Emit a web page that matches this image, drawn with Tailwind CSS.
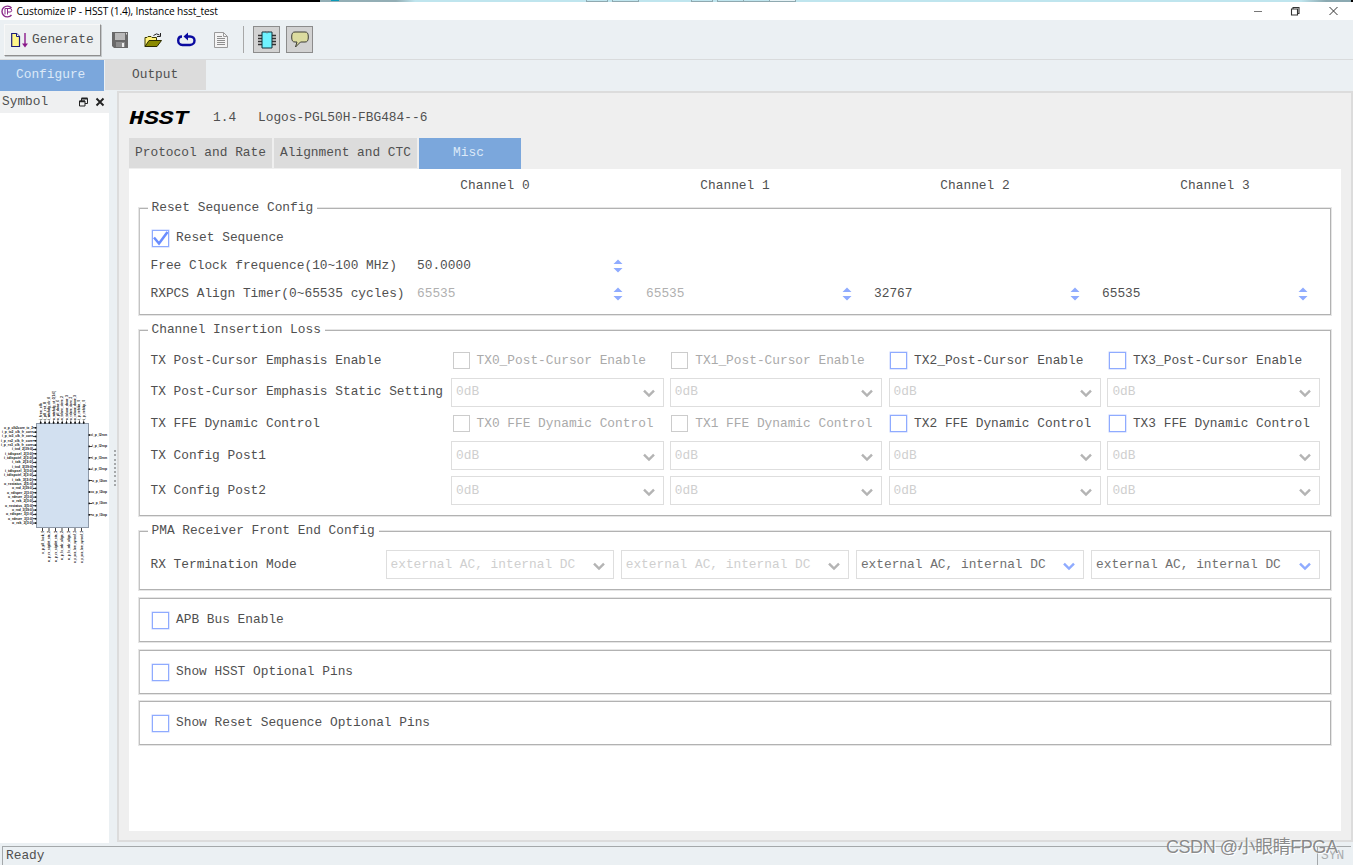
<!DOCTYPE html>
<html lang="en">

<head>
    <meta charset="UTF-8">
    <meta name="viewport" content="width=device-width, initial-scale=1.0">
    <title>Customize IP - HSST</title>
    <script src="https://cdn.jsdelivr.net/npm/@tailwindcss/browser@4"></script>
</head>

<body class="w-[1353px] h-[865px] overflow-hidden relative flex flex-col bg-[#ebf0f3] text-[#505050] text-[12.84px] leading-4 whitespace-nowrap font-['Liberation_Mono',monospace]">
    <!-- Shared shapes -->
    <svg class="hidden">
        <symbol id="chevron" viewBox="0 0 12 9"><path d="M1 1.6L6 6.6L11 1.6" fill="none" stroke="currentColor" stroke-width="2.4" /></symbol>
        <symbol id="spin" viewBox="0 0 10 14"><path d="M5 0.5L9.5 5H0.5ZM5 13.5L9.5 9H0.5Z" fill="#8fabff" /></symbol>
    </svg>

    <!-- Strip of the window behind -->
    <div class="h-[2px] shrink-0 flex">
        <div class="w-[320px] bg-black"></div>
        <div class="w-[95px] bg-linear-to-r from-[#93aeb5] from-80% to-[#bfe5ee] pl-[11px]"><div class="w-2 h-px bg-[#0a9ab8]"></div></div>
        <div class="flex-1 bg-[#bfe5ee] flex pl-[171px]">
            <div class="w-[22px] border-x border-b border-[#8fa9b0]"></div>
            <div class="w-[27px] ml-1 border-x border-b border-[#8fa9b0]"></div>
            <div class="w-[22px] ml-[52px] border-x border-b border-[#8fa9b0]"></div>
            <div class="w-[27px] ml-1 border-x border-b border-[#8fa9b0]"></div>
            <div class="w-[26px] border-r border-b border-[#8fa9b0]"></div>
            <div class="w-[26px] border-r border-b border-[#8fa9b0] bg-[#e6f2f5]"></div>
        </div>
        <div class="w-[50px] bg-linear-to-r from-[#bfe5ee] to-[#8ba9b1] to-50%"></div>
        <div class="w-[2px] bg-black"></div>
    </div>

    <!-- Title bar -->
    <div class="h-[18px] shrink-0 bg-white flex items-center">
        <svg class="w-[13px] h-[13px]" viewBox="0 0 13 13" fill="none" stroke="#8a2a8a">
            <path d="M11.5 3A5.4 5.4 0 1 0 11.5 10" stroke-width="1.4" />
            <path d="M5 3.5V9.5M7.5 9.5V3.5H10A1.6 1.6 0 0 1 10 7H7.5M5 3.5H8" stroke-width="1" />
        </svg>
        <span class="ml-[3.5px] text-[10.2px] tracking-[-0.13px] text-black font-['Open_Sans',sans-serif]">Customize IP - HSST (1.4), Instance hsst_test</span>
        <svg class="ml-auto mr-[15px] w-[84px] h-[10px]" viewBox="0 0 84 10" fill="none" stroke="#333">
            <path d="M0 5.5H8" stroke="#777" />
            <path d="M37.5 3H43.5V9H37.5ZM39 3V1.5H45V7.5H43.5" stroke-width="1.1" />
            <path d="M75.500 1L83.500 9M83.500 1L75.500 9" />
        </svg>
    </div>

    <!-- Toolbar -->
    <div class="h-10 shrink-0 border-b border-[#d9dbdc] flex items-center pl-1">
        <div class="w-[97px] h-8 mt-px border-r border-b border-[#8f8f8f] border-t border-l border-t-[#f8f8f8] border-l-[#f8f8f8] shadow-[1px_1px_0_#c4c8ca] flex items-center pl-[6px] bg-[#edf0f1]">
            <svg class="w-[17px] h-4" viewBox="0 0 17 16">
                <path d="M0.700 1.500H5.500L8.500 4.500V14.500H0.700Z" fill="#fff68a" stroke="#1c1c78" stroke-width="1.2" />
                <path d="M5.500 1.500V4.500H8.500" fill="#fff" stroke="#1c1c78" />
                <path d="M14 1V13.500" stroke="#8a1a8a" stroke-width="1.4" />
                <path d="M11 11.500H17L14 15.500Z" fill="#8a1a8a" />
            </svg>
            <span class="ml-[4px]">Generate</span>
        </div>
        <svg class="ml-[11px] w-4 h-4" viewBox="0 0 16 16">
            <path d="M0 0H16V16H2L0 14Z" fill="#696969" />
            <path d="M3 1H13V8H3Z" fill="#b9b9b9" />
            <path d="M4 10H13V15H4Z" fill="#8d8d8d" />
            <path d="M10 11H12V15H10Z" fill="#eee" />
            <path d="M14 1H15V2.500H14Z" fill="#ddd" />
        </svg>
        <svg class="ml-[16px] w-[19px] h-4" viewBox="0 0 19 16">
            <path d="M1 14.500V5.500H3L4 4.500H7L8 5.500H12.500V8.500" fill="#fff27a" stroke="#3b3b00" />
            <path d="M1 14.500L5 8.500H17.500L13 14.500Z" fill="#8a8a00" stroke="#2c2c00" />
            <path d="M9.500 3.500Q12.500 0.500 15.500 3M16.500 1V4.500H13" fill="none" stroke="#222" />
        </svg>
        <svg class="ml-[14px] w-[19px] h-4" viewBox="0 0 19 16">
            <path d="M5 4.500C2.500 4.500 1.200 6.300 1.200 8.500S2.500 13 5.500 13H13C16 13 17.500 10.700 17.500 8.500S16 4.500 13 4.500H10" fill="none" stroke="#0a0aa0" stroke-width="2.4" />
            <path d="M11 0.500V8.500L6.500 4.500Z" fill="#0a0aa0" />
        </svg>
        <svg class="ml-[18px] w-[14px] h-4" viewBox="0 0 14 16">
            <path d="M0.500 0.500H9.500L13.500 4.500V15.500H0.500Z" fill="#f4f4f4" stroke="#9a9a9a" />
            <path d="M9.500 0.500V4.500H13.500" fill="none" stroke="#9a9a9a" />
            <path d="M3 4.500H8M3 6.500H11M3 8.500H11M3 10.500H11M3 12.500H11" stroke="#8e8e8e" />
        </svg>
        <div class="ml-[15px] w-px h-[27px] bg-[#a8a8a8]"></div>
        <div class="ml-[9px] w-[27px] h-[27px] bg-[#d2d2d2] border border-[#8c8c8c] flex items-center justify-center">
            <svg class="w-[18px] h-[18px]" viewBox="0 0 18 18">
                <path d="M0 4.500H18M0 7.500H18M0 10.500H18M0 13.500H18" stroke="#333" stroke-width="1.300" />
                <path d="M4 1H14V17H4Z" fill="#6ff3ff" stroke="#14303a" />
                <path d="M7.500 1Q9 3 10.500 1" fill="#fff" stroke="#14303a" stroke-width="0.700" />
            </svg>
        </div>
        <div class="ml-[6px] w-[27px] h-[27px] bg-[#d2d2d2] border border-[#8c8c8c] flex items-center justify-center">
            <svg class="w-[18px] h-[17px]" viewBox="0 0 18 17">
                <path d="M4 1H14C16.500 1 17.300 2.500 17.300 6S16.500 11 14 11H9.500L4.500 16L6 11H4C1.500 11 0.700 9.500 0.700 6S1.500 1 4 1Z" fill="#dcdca0" stroke="#3c3c34" />
            </svg>
        </div>
    </div>

    <!-- Main tabs -->
    <div class="h-[31px] shrink-0 flex">
        <div class="w-[104px] h-[31px] bg-[#7ba7dc] text-[#dce9f8] pl-4 pt-[7px]">Configure</div>
        <div class="ml-px w-[101px] h-[30px] bg-[#dcdcdc] pl-[27px] pt-[7px]">Output</div>
    </div>

    <div class="h-[752px] shrink-0 flex">
        <!-- Symbol dock -->
        <div class="w-[109px] shrink-0 flex flex-col">
            <div class="h-[22px] shrink-0 bg-[#eff0f1] flex items-center pl-[2px] pr-[4px]">
                <span>Symbol</span>
                <svg class="ml-auto w-[27px] h-[10px]" viewBox="0 0 27 10" fill="none" stroke="#222">
                    <path d="M1.500 4H7V9H1.500ZM3.500 4V1.500H9.500V6.500H7" />
                    <path d="M1.500 4.300H7M3.500 1.500H9.500" stroke-width="1.800" />
                    <path d="M18.500 1.500L25.500 8.500M25.500 1.500L18.500 8.500" stroke-width="1.900" />
                </svg>
            </div>
            <div class="flex-1 bg-white">
                <svg id="symbol" class="w-[109px] h-[730px] font-['Liberation_Sans',sans-serif] font-bold" viewBox="0 113 109 730" font-size="3.2" fill="#111">
                    <rect x="36.500" y="423.500" width="52" height="104" fill="#d2e0f0" stroke="#8e99a8" />
                </svg>
            </div>
        </div>
        <div class="w-2 shrink-0 flex flex-col items-end justify-center pr-px pt-[2px] gap-[2.2px]" id="grip"></div>

        <!-- Configuration page -->
        <div class="w-[1236px] shrink-0 h-[751px] border-2 border-[#dcdcdc] bg-[#efefef] px-[10px] pr-[10px]">
            <div class="h-[45px] flex items-center pt-[4px]">
                <div class="w-[84px]"><span class="inline-block origin-left scale-x-[1.24] translate-y-px text-[20px] leading-6 font-bold italic text-black">HSST</span></div>
                <span class="w-[45px]">1.4</span>
                <span>Logos-PGL50H-FBG484--6</span>
            </div>
            <div class="h-[31px] flex gap-[2px]">
                <div class="w-[143px] h-[30px] bg-[#dcdcdc] pt-[7px] text-center">Protocol and Rate</div>
                <div class="w-[143px] h-[30px] bg-[#dcdcdc] pt-[7px] text-center">Alignment and CTC</div>
                <div class="w-[102px] bg-[#7ba7dc] text-[#dce9f8] pt-[7px] pr-[3px] text-center">Misc</div>
            </div>
            <div class="h-[662px] bg-white px-[10px] pt-[9px] flex flex-col">
                <div class="h-[30px] shrink-0 grid grid-cols-[repeat(4,240px)] pl-[236px] text-center">
                    <span>Channel 0</span><span>Channel 1</span><span>Channel 2</span><span>Channel 3</span>
                </div>

                <!-- Reset Sequence Config -->
                <div class="relative h-[107px] border border-[#b2b2b2] border-l-[#c4c4c4] shadow-[0_0_0_1px_#e6e6e6] pl-[10.5px] pt-[19px]">
                    <span class="absolute -top-[9px] left-[7.5px] bg-white px-1">Reset Sequence Config</span>
                    <div class="h-[20px] flex items-center gap-[7px] pl-[1.5px]">
                        <div class="w-[17px] h-[17px] border border-[#8fabff] shadow-[0_0_0_0.5px_#c3d1ff]">
                            <svg class="w-[15px] h-[15px]" viewBox="0 0 15 15"><path d="M1 6.500L6 12.500L14.500 1" fill="none" stroke="#6a8dff" stroke-width="2.500" /></svg>
                        </div>
                        <span>Reset Sequence</span>
                    </div>
                    <div class="h-[28px] mt-[4px] flex items-center">
                        <span class="w-[266.500px]">Free Clock frequence(10~100 MHz)</span>
                        <span class="w-[196px]">50.0000</span>
                        <svg class="w-[10px] h-[14px]"><use href="#spin" /></svg>
                    </div>
                    <div class="h-[28px] flex items-center">
                        <span class="w-[266.500px]">RXPCS Align Timer(0~65535 cycles)</span>
                        <div class="w-[229px] flex items-center text-[#b0b0b0]"><span class="w-[196px]">65535</span><svg class="w-[10px] h-[14px]"><use href="#spin" /></svg></div>
                        <div class="w-[228px] flex items-center text-[#b0b0b0]"><span class="w-[196px]">65535</span><svg class="w-[10px] h-[14px]"><use href="#spin" /></svg></div>
                        <div class="w-[228px] flex items-center"><span class="w-[196px]">32767</span><svg class="w-[10px] h-[14px]"><use href="#spin" /></svg></div>
                        <div class="flex items-center"><span class="w-[196px]">65535</span><svg class="w-[10px] h-[14px]"><use href="#spin" /></svg></div>
                    </div>
                </div>

                <!-- Channel Insertion Loss -->
                <div class="relative mt-[15px] h-[186px] border border-[#b2b2b2] border-l-[#c4c4c4] shadow-[0_0_0_1px_#e6e6e6] pl-[10.5px] pt-[13.5px]">
                    <span class="absolute -top-[9px] left-[7.5px] bg-white px-1">Channel Insertion Loss</span>
                    <div id="loss" class="grid grid-cols-[300.5px_repeat(4,218.8px)] grid-rows-[32px_31px_32px_32px_38px] items-center"></div>
                </div>

                <!-- PMA Receiver Front End Config -->
                <div class="relative mt-[15px] h-[59px] border border-[#b2b2b2] border-l-[#c4c4c4] shadow-[0_0_0_1px_#e6e6e6] pl-[10.5px] pt-[18px]">
                    <span class="absolute -top-[9px] left-[7.5px] bg-white px-1">PMA Receiver Front End Config</span>
                    <div id="pma" class="grid grid-cols-[235px_repeat(4,235.200px)] items-center"></div>
                </div>

                <div class="mt-2 h-[44px] border border-[#b2b2b2] border-l-[#c4c4c4] shadow-[0_0_0_1px_#e6e6e6] flex items-center gap-[7px] pl-[12px]">
                    <div class="w-[17px] h-[17px] border border-[#8fabff] shadow-[0_0_0_0.5px_#c3d1ff]"></div><span>APB Bus Enable</span>
                </div>
                <div class="mt-2 h-[44px] border border-[#b2b2b2] border-l-[#c4c4c4] shadow-[0_0_0_1px_#e6e6e6] flex items-center gap-[7px] pl-[12px]">
                    <div class="w-[17px] h-[17px] border border-[#8fabff] shadow-[0_0_0_0.5px_#c3d1ff]"></div><span>Show HSST Optional Pins</span>
                </div>
                <div class="mt-[7px] h-[44px] border border-[#b2b2b2] border-l-[#c4c4c4] shadow-[0_0_0_1px_#e6e6e6] flex items-center gap-[7px] pl-[12px]">
                    <div class="w-[17px] h-[17px] border border-[#8fabff] shadow-[0_0_0_0.5px_#c3d1ff]"></div><span>Show Reset Sequence Optional Pins</span>
                </div>
            </div>
        </div>
    </div>

    <!-- Status bar -->
    <div class="flex-1 flex pt-[3px] pl-[2px] pr-[2px]">
        <div class="flex-1 border-t border-l border-[#a4a8aa] pl-[3px] pt-px">Ready</div>
        <div class="w-[34px] border-t border-l border-[#a4a8aa] pl-[3px] pt-px text-[#a9acae]">SYN</div>
    </div>

    <!-- Watermark -->
    <div class="absolute left-[1166px] top-[835px] text-[18px] leading-6 text-[#7d7d7d]/90 [text-shadow:1px_1px_0_#fff] font-['Liberation_Sans','Noto_Sans_CJK_SC',sans-serif] tracking-[-0.45px]">CSDN @小眼睛FPGA</div>

    <script>
        const loss = document.getElementById("loss");
        const pma = document.getElementById("pma");

        function combo(text, enabled, width) {
            return `<div class="h-[29px] border border-[#dedede] flex items-center pl-[4px] pr-[8px] ${enabled ? "text-[#707070]" : "text-[#cfcfcf]"}" style="width:${width}px">
                <span>${text}</span>
                <svg class="ml-auto mt-[3px] w-[12px] h-[9px] ${enabled ? "text-[#8fabff]" : "text-[#b4b4b4]"}"><use href="#chevron" /></svg>
            </div>`;
        }

        function check(text, enabled) {
            return `<div class="flex items-center gap-[7px] pl-[1.5px] ${enabled ? "" : "text-[#aaaaaa]"}">
                <div class="w-[17px] h-[17px] border ${enabled ? "border-[#8fabff] shadow-[0_0_0_0.5px_#c3d1ff]" : "border-[#cccccc]"}"></div><span>${text}</span>
            </div>`;
        }

        // One row: label followed by a cell per channel
        function row(label, cell) {
            return `<span>${label}</span>` + [0, 1, 2, 3].map(cell).join("");
        }

        loss.innerHTML =
            row("TX Post-Cursor Emphasis Enable", n => check(`TX${n}_Post-Cursor Enable`, n > 1)) +
            row("TX Post-Cursor Emphasis Static Setting", () => combo("0dB", false, 212.5)) +
            row("TX FFE Dynamic Control", n => check(`TX${n} FFE Dynamic Control`, n > 1)) +
            row("TX Config Post1", () => combo("0dB", false, 212.5)) +
            row("TX Config Post2", () => combo("0dB", false, 212.5));

        pma.innerHTML = row("RX Termination Mode", n => combo("external AC, internal DC", n > 1, 228.6));

        // Splitter dots
        document.getElementById("grip").innerHTML = '<div class="w-[2px] h-[2px] bg-[#a5a8aa]"></div>'.repeat(9);

        // Symbol pins: [name, where the name starts or ends]
        const left = [
            ["o_p_clk2core_tx_2", 4], ["i_p_tx2_clk_fr_core", 2], ["i_p_tx3_clk_fr_core", 2], ["i_p_rx2_clk_fr_core", 1], ["i_p_rx3_clk_fr_core", 1],
            ["i_txd_2[39:0]", 12], ["i_tdispsel_2[3:0]", 5], ["i_tdispctrl_2[3:0]", 4], ["i_txk_2[3:0]", 12],
            ["i_txd_3[39:0]", 12], ["i_tdispsel_3[3:0]", 5], ["i_tdispctrl_3[3:0]", 4], ["i_txk_3[3:0]", 12],
            ["o_rxstatus_2[5:0]", 4], ["o_rxd_2[39:0]", 12], ["o_rdisper_2[3:0]", 7], ["o_rdecer_2[3:0]", 8], ["o_rxk_2[3:0]", 12],
            ["o_rxstatus_3[5:0]", 5], ["o_rxd_3[39:0]", 12], ["o_rdisper_3[3:0]", 6], ["o_rdecer_3[3:0]", 8], ["o_rxk_3[3:0]", 12]
        ];
        const right = ["i_p_l2rxn", "i_p_l2rxp", "i_p_l3rxn", "i_p_l3rxp", "o_p_l2txn", "o_p_l2txp", "o_p_l3txn", "o_p_l3txp"];
        const above = [
            ["i_free_clk", 403], ["i_pll_rst_0", 402], ["i_wtchdg_clr_0", 397], ["o_wtchdg_st_0[1:0]", 391], ["o_pll_done_0", 400], ["o_txlane_done_2", 396],
            ["o_txlane_done_3", 395], ["o_rxlane_done_2", 397], ["o_rxlane_done_3", 395], ["i_p_refckn_0", 400], ["i_p_refckp_0", 400]
        ];
        const below = [
            ["o_p_pll_lock_0", 554], ["o_p_rx_sigdet_sta_2", 562], ["o_p_rx_sigdet_sta_3", 562], ["o_p_lx_cdr_align_2", 560],
            ["o_p_lx_cdr_align_3", 560], ["o_p_pcs_lsm_synced_2", 563], ["o_p_pcs_lsm_synced_3", 563]
        ];

        let pins = "";
        left.forEach(([name, x], i) => {
            const y = 427.8 + i * 4.33;
            pins += `<text x="${x}" y="${y + 1}" textLength="${33 - x}" lengthAdjust="spacingAndGlyphs">${name}</text><rect x="33" y="${y - 0.4}" width="3" height="0.8"/><rect x="34.8" y="${y - 0.8}" width="1.6" height="1.6"/>`;
        });
        right.forEach((name, i) => {
            const y = 435 + i * 11.4;
            pins += `<text x="92" y="${y + 1}" textLength="15" lengthAdjust="spacingAndGlyphs">${name}</text><rect x="89" y="${y - 0.4}" width="3" height="0.8"/><rect x="88.5" y="${y - 0.8}" width="1.4" height="1.6"/>`;
        });
        above.forEach(([name, y], i) => {
            const x = 40.7 + i * 4.3;
            pins += `<text transform="translate(${x + 1} 420) rotate(-90)" textLength="${420 - y}" lengthAdjust="spacingAndGlyphs">${name}</text><rect x="${x - 0.4}" y="420.5" width="0.8" height="3"/><rect x="${x - 0.8}" y="422" width="1.6" height="1.6"/>`;
        });
        below.forEach(([name, y], i) => {
            const x = 42.5 + i * 6.5;
            pins += `<text transform="translate(${x + 1} ${y}) rotate(-90)" textLength="${y - 531}" lengthAdjust="spacingAndGlyphs">${name}</text><rect x="${x - 0.4}" y="528" width="0.8" height="3"/>`;
        });
        document.getElementById("symbol").innerHTML += pins;
    </script>
</body>

</html>
